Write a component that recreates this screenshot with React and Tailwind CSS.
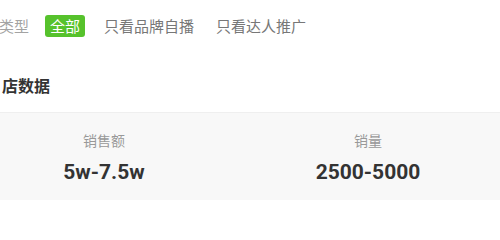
import React from 'react';

const cjk = { fontFamily: '"Noto Sans CJK SC", "Noto Sans", sans-serif' };

const stats = [
  { label: '销售额', value: '5w-7.5w' },
  { label: '销量', value: '2500-5000' },
];

const App = () => {
  return (
    <div className="w-[500px] h-[219px] overflow-hidden bg-white" style={cjk}>
      <div className="flex items-center h-[22px] mt-[15px] text-[15px] leading-[22px]">
        <span className="-ml-[1px] text-[#a3a3a3]">类型</span>
        <span className="ml-[16px] h-[22px] px-[5px] rounded-[3px] bg-[#56c22c] text-white">全部</span>
        <span className="ml-[19px] text-[#777]">只看品牌自播</span>
        <span className="ml-[22px] text-[#777]">只看达人推广</span>
      </div>

      <h2 className="mt-[36px] ml-[2px] text-[16px] leading-[24px] font-bold text-[#333]">店数据</h2>

      <div className="-ml-[28px] w-[528px] mt-[15px] grid grid-cols-2 bg-[#f8f8f8] border-t border-[#efefef]">
        {stats.map((s) => (
          <div key={s.label} className="flex flex-col items-center pt-[17px] pb-[15px]">
            <span className="text-[14px] leading-[20px] text-[#999]">{s.label}</span>
            <span
              className="mt-[9px] text-[21px] leading-[26px] font-bold text-[#333]"
              style={{ fontFamily: 'Roboto, "Liberation Sans", sans-serif' }}
            >
              {s.value}
            </span>
          </div>
        ))}
      </div>
    </div>
  );
};

export default App;
